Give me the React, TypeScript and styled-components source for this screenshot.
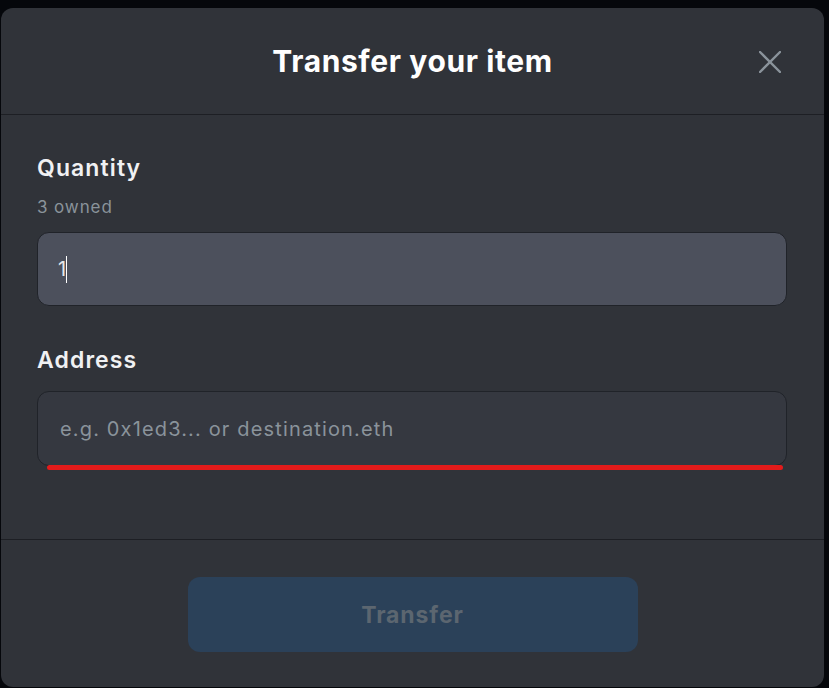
import React from "react";
import styled, { createGlobalStyle } from "styled-components";

const Global = createGlobalStyle`
  html, body { margin: 0; padding: 0; background: #05070b; }
  body { font-family: "Inter", "Noto Sans", sans-serif; }
  * { box-sizing: border-box; }
`;

const Backdrop = styled.div`
  width: 829px;
  height: 688px;
  background: #05070b;
  padding: 8px 5px 1px 1px;
  display: flex;
`;

const Modal = styled.div`
  flex: 1;
  background: #303339;
  border-radius: 12px;
  display: flex;
  flex-direction: column;
  overflow: hidden;
`;

const Header = styled.header`
  height: 107px;
  border-bottom: 1px solid #1d1f24;
  display: flex;
  align-items: center;
  justify-content: center;
  position: relative;
`;

const Title = styled.h2`
  margin: 0;
  font-family: "Inter", sans-serif;
  font-weight: 700;
  font-size: 30px;
  color: #ffffff;
  letter-spacing: 0.6px;
`;

const CloseButton = styled.button`
  position: absolute;
  right: 43px;
  top: 43px;
  width: 22px;
  height: 22px;
  padding: 0;
  border: none;
  background: transparent;
  display: flex;
  align-items: center;
  justify-content: center;
  cursor: pointer;
`;

const Body = styled.div`
  flex: 1;
  padding: 38px 37px 0 36px;
  display: flex;
  flex-direction: column;
  border-bottom: 1px solid #1d1f24;
`;

const Label = styled.div<{ $gap?: number }>`
  font-family: "Inter", sans-serif;
  font-weight: 600;
  font-size: 23px;
  line-height: 30px;
  letter-spacing: 1.1px;
  color: #f0f1f3;
  margin-top: ${(p) => p.$gap ?? 0}px;
`;

const Sub = styled.div`
  font-family: "Inter", sans-serif;
  font-size: 17px;
  line-height: 22px;
  letter-spacing: 0.9px;
  color: #8a939b;
  margin-top: 13px;
`;

const Field = styled.div<{ $gap: number }>`
  position: relative;
  margin-top: ${(p) => p.$gap}px;
`;

const Input = styled.input<{ $filled?: boolean; $h: number }>`
  width: 100%;
  height: ${(p) => p.$h}px;
  border-radius: 12px;
  border: 1px solid #202329;
  background: ${(p) => (p.$filled ? "#4c505c" : "#353840")};
  padding: 0 22px 0 ${(p) => (p.$filled ? 20 : 22)}px;
  font-family: "Inter", sans-serif;
  font-size: 20px;
  letter-spacing: 1.15px;
  color: #e5e8eb;
  caret-color: #ffffff;
  outline: none;
  &::placeholder {
    color: #8a939b;
  }
`;

const Caret = styled.span`
  position: absolute;
  left: 29px;
  top: 24px;
  width: 1px;
  height: 27px;
  background: #ffffff;
  pointer-events: none;
`;

const Underline = styled.div`
  position: absolute;
  left: 10px;
  right: 4px;
  bottom: -4px;
  height: 5px;
  border-radius: 3px;
  background: #e31b1b;
`;

const Footer = styled.footer`
  height: 147px;
  display: flex;
  align-items: center;
  justify-content: center;
  padding-top: 2px;
`;

const TransferButton = styled.button`
  width: 450px;
  height: 75px;
  border: none;
  border-radius: 12px;
  background: #2b4159;
  color: #5c6670;
  font-family: "Inter", sans-serif;
  font-weight: 700;
  font-size: 23px;
  letter-spacing: 0.9px;
  cursor: not-allowed;
`;

export default function App() {
  return (
    <>
      <Global />
      <Backdrop>
        <Modal>
          <Header>
            <Title>Transfer your item</Title>
            <CloseButton aria-label="Close">
              <svg width="22" height="22" viewBox="0 0 22 22">
                <path d="M1 1 L21 21 M21 1 L1 21" stroke="#8a939b" strokeWidth="2.4" strokeLinecap="round" />
              </svg>
            </CloseButton>
          </Header>
          <Body>
            <Label>Quantity</Label>
            <Sub>3 owned</Sub>
            <Field $gap={14}>
              <Input $filled $h={74} defaultValue="1" />
              <Caret />
            </Field>
            <Label $gap={39}>Address</Label>
            <Field $gap={16}>
              <Input $h={75} placeholder="e.g. 0x1ed3... or destination.eth" />
              <Underline />
            </Field>
          </Body>
          <Footer>
            <TransferButton disabled>Transfer</TransferButton>
          </Footer>
        </Modal>
      </Backdrop>
    </>
  );
}
